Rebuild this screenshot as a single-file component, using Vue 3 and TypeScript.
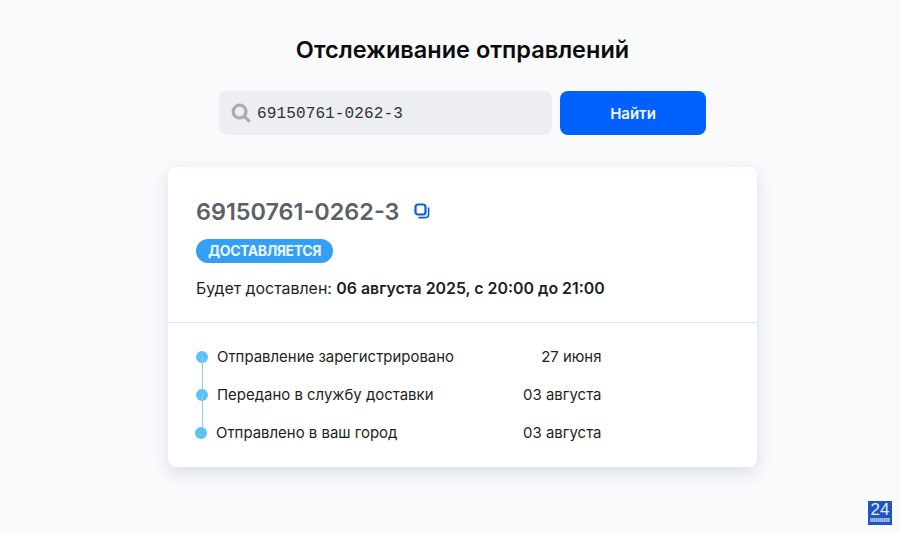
<script setup lang="ts">
interface TrackEvent {
  title: string
  date: string
  shifted?: boolean
}

const trackNumber = '69150761-0262-3'

const events: TrackEvent[] = [
  { title: 'Отправление зарегистрировано', date: '27 июня' },
  { title: 'Передано в службу доставки', date: '03 августа' },
  { title: 'Отправлено в ваш город', date: '03 августа', shifted: true }
]
</script>

<template>
  <main class="page">
    <h1 class="heading">Отслеживание отправлений</h1>

    <form class="search" @submit.prevent>
      <label class="search__field">
        <svg class="search__icon" viewBox="0 0 20 20" fill="none" stroke="#a9adb3" stroke-width="3.2" stroke-linecap="round">
          <circle cx="8.6" cy="8.6" r="6.4" />
          <path d="M13.4 13.4 17.8 17.8" />
        </svg>
        <input class="search__input" type="text" :value="trackNumber" />
      </label>
      <button class="search__button" type="submit">Найти</button>
    </form>

    <section class="card">
      <div class="card__top">
        <div class="number">
          <span class="number__text">{{ trackNumber }}</span>
          <svg class="number__copy" viewBox="0 0 16 16" fill="none" stroke="#0b5fd8" stroke-width="2.2">
            <rect x="1.5" y="1.5" width="10" height="10" rx="2.4" />
            <path d="M14.6 5v6.6a3 3 0 0 1-3 3H5" stroke-linecap="round" stroke-width="1.6" />
          </svg>
        </div>
        <span class="status">ДОСТАВЛЯЕТСЯ</span>
        <p class="delivery">Будет доставлен: <b>06 августа 2025, с 20:00 до 21:00</b></p>
      </div>

      <ul class="timeline">
        <li
          v-for="event in events"
          :key="event.title"
          class="timeline__row"
          :class="{ 'timeline__row--shifted': event.shifted }"
        >
          <span class="timeline__dot"></span>
          <span class="timeline__title">{{ event.title }}</span>
          <span class="timeline__date">{{ event.date }}</span>
        </li>
      </ul>
    </section>

    <div class="corner">
      <span class="corner__num">24</span>
      <span class="corner__bar"></span>
    </div>
  </main>
</template>

<style>
html,
body {
  margin: 0;
  background: #f8fafc;
}
</style>

<style scoped>
.page {
  box-sizing: border-box;
  height: 533px;
  padding: 35px 0 0 25px;
  display: flex;
  flex-direction: column;
  align-items: center;
  overflow: hidden;
  font-family: Inter, "Liberation Sans", sans-serif;
  color: #1d1f23;
}

.heading {
  margin: 0;
  font-size: 23.5px;
  line-height: 30px;
  font-weight: 600;
  color: #0b0c0e;
}

.search {
  display: flex;
  gap: 8px;
  margin-top: 26px;
}

.search__field {
  display: flex;
  align-items: center;
  box-sizing: border-box;
  width: 333px;
  height: 44px;
  padding-left: 12px;
  gap: 6px;
  border-radius: 8px;
  background: #edeef1;
}

.search__icon {
  width: 20px;
  height: 20px;
  flex: none;
}

.search__input {
  flex: 1;
  min-width: 0;
  padding: 1px 0 0;
  border: 0;
  outline: 0;
  background: transparent;
  font-family: "Liberation Mono", monospace;
  font-size: 16px;
  letter-spacing: 0.13px;
  color: #303236;
}

.search__button {
  width: 146px;
  height: 44px;
  border: 0;
  border-radius: 8px;
  background: #0061fe;
  color: #f4f8ff;
  font-family: inherit;
  font-size: 15px;
  font-weight: 600;
}

.card {
  width: 589px;
  height: 300px;
  margin-top: 32px;
  border-radius: 8px;
  background: #fff;
  box-shadow: 0 6px 16px rgba(40, 60, 90, 0.14);
}

.card__top {
  box-sizing: border-box;
  height: 156px;
  padding: 28px 28px 0;
  border-bottom: 1px solid #dfe1e4;
}

.number {
  display: flex;
  align-items: center;
  gap: 15px;
  height: 32px;
}

.number__text {
  font-size: 23.4px;
  font-weight: 600;
  color: #5b6168;
}

.number__copy {
  width: 16px;
  height: 16px;
}

.status {
  display: inline-block;
  margin-top: 12px;
  padding: 0 12px;
  height: 24px;
  line-height: 23px;
  border-radius: 12px;
  background: #339ff5;
  color: #eef7ff;
  font-size: 14px;
  font-weight: 700;
  letter-spacing: -0.4px;
}

.delivery {
  margin: 15px 0 0;
  font-size: 15.9px;
  line-height: 22px;
}

.delivery b {
  font-weight: 600;
}

.timeline {
  list-style: none;
  margin: 0;
  padding: 15px 0 0 28px;
}

.timeline__row {
  position: relative;
  display: flex;
  align-items: center;
  width: 405.5px;
  height: 38px;
  font-size: 14.95px;
}

.timeline__row:not(:last-child)::after {
  content: "";
  position: absolute;
  left: 5.5px;
  top: 19px;
  width: 1px;
  height: 38px;
  background: #8fd0ef;
}

.timeline__row--shifted .timeline__dot {
  margin-left: -1px;
}

.timeline__dot {
  flex: none;
  width: 12px;
  height: 12px;
  margin-right: 9px;
  border-radius: 50%;
  background: #5cc3f7;
}

.timeline__title {
  flex: 1;
}

.corner {
  position: absolute;
  left: 868px;
  top: 501px;
  width: 24px;
  height: 24px;
  background: #1e56bd;
  color: #e6edfa;
  overflow: hidden;
}

.corner__num {
  display: block;
  font-family: "Liberation Sans", sans-serif;
  font-size: 17px;
  line-height: 17px;
  text-align: center;
}

.corner__bar {
  display: block;
  height: 4px;
  margin: 0 2px;
  background: repeating-linear-gradient(90deg, #9db9e8 0 1px, #7f9fdc 1px 2px);
}
</style>
